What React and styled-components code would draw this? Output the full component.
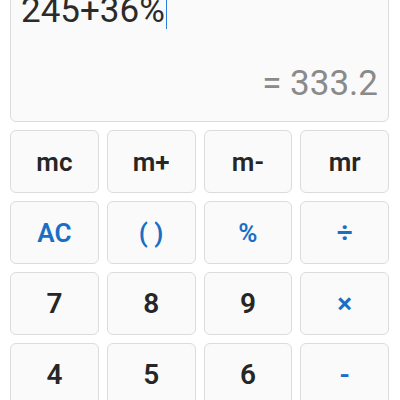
import React from 'react';
import styled, { createGlobalStyle } from 'styled-components';

const GlobalStyle = createGlobalStyle`
  html, body {
    margin: 0;
    padding: 0;
    background: #ffffff;
    overflow: hidden;
  }
  body {
    font-family: Roboto, "Noto Sans", "Liberation Sans", sans-serif;
  }
`;

const Screen = styled.div`
  display: flex;
  flex-direction: column;
  gap: 8px;
  padding: 0 11px 0 10px;
  margin-top: -40px;
`;

const Display = styled.div`
  height: 162px;
  box-sizing: border-box;
  display: flex;
  flex-direction: column;
  justify-content: space-between;
  padding: 32px 10px 20px 10px;
  background: #fafafa;
  border: 1.5px solid #dcdcdc;
  border-radius: 6px;
`;

const Expression = styled.div`
  display: flex;
  align-items: flex-start;
  font-size: 35px;
  line-height: 1;
  color: #2b2b2b;
`;

const Caret = styled.span`
  display: inline-block;
  width: 1.5px;
  height: 40px;
  margin-top: -4px;
  margin-left: 1px;
  background: #2a7fe0;
`;

const Result = styled.div`
  text-align: right;
  font-size: 35px;
  line-height: 1;
  color: #8a8a8a;
`;

const Keypad = styled.div`
  display: grid;
  grid-template-columns: repeat(4, 1fr);
  grid-auto-rows: 63px;
  gap: 8px;
`;

const Key = styled.button`
  display: flex;
  align-items: center;
  justify-content: center;
  padding: 0;
  background: #fafafa;
  border: 1.5px solid #dcdcdc;
  border-radius: 6px;
  font-family: Roboto, "Noto Sans", "Liberation Sans", sans-serif;
  font-size: ${({ $small }) => ($small ? '26px' : '28px')};
  font-weight: 600;
  color: ${({ $accent }) => ($accent ? '#1a6fc4' : '#262626')};
  cursor: pointer;
`;

const keys = [
  { label: 'mc', small: true },
  { label: 'm+', small: true },
  { label: 'm-', small: true },
  { label: 'mr', small: true },
  { label: 'AC', accent: true, small: true },
  { label: '( )', accent: true, small: true },
  { label: '%', accent: true, small: true },
  { label: '÷', accent: true },
  { label: '7' },
  { label: '8' },
  { label: '9' },
  { label: '×', accent: true },
  { label: '4' },
  { label: '5' },
  { label: '6' },
  { label: '-', accent: true },
];

export default function App() {
  return (
    <>
      <GlobalStyle />
      <Screen>
        <Display>
          <Expression>
            245+36%
            <Caret />
          </Expression>
          <Result>= 333.2</Result>
        </Display>
        <Keypad>
          {keys.map((k) => (
            <Key key={k.label} $accent={k.accent} $small={k.small}>
              {k.label}
            </Key>
          ))}
        </Keypad>
      </Screen>
    </>
  );
}
